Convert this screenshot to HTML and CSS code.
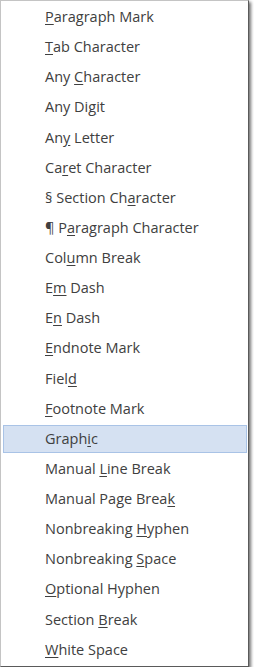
FILE: index.html
```html
<!DOCTYPE html>
<html lang="en">
<head>
    <meta charset="utf-8" />
    <title>Special</title>
    <link rel="stylesheet" href="styles.css">
</head>
<body>
    <div class="menu">
        <!--菜单项-->
        <ul>
            <li><span class="label"><u>P</u>aragraph Mark</span></li>
            <li><span class="label"><u>T</u>ab Character</span></li>
            <li><span class="label">Any <u>C</u>haracter</span></li>
            <li><span class="label">Any Di<u>g</u>it</span></li>
            <li><span class="label">An<u>y</u> Letter</span></li>
            <li><span class="label">Ca<u>r</u>et Character</span></li>
            <li><span class="label">§ Section Ch<u>a</u>racter</span></li>
            <li><span class="label">¶ P<u>a</u>ragraph Character</span></li>
            <li><span class="label">Col<u>u</u>mn Break</span></li>
            <li><span class="label">E<u>m</u> Dash</span></li>
            <li><span class="label">E<u>n</u> Dash</span></li>
            <li><span class="label"><u>E</u>ndnote Mark</span></li>
            <li><span class="label">Fiel<u>d</u></span></li>
            <li><span class="label"><u>F</u>ootnote Mark</span></li>
            <li class="current"><span class="label">Graph<u>i</u>c</span></li>
            <li><span class="label">Manual <u>L</u>ine Break</span></li>
            <li><span class="label">Manual Page Brea<u>k</u></span></li>
            <li><span class="label">Nonbreaking <u>H</u>yphen</span></li>
            <li><span class="label">Nonbreaking <u>S</u>pace</span></li>
            <li><span class="label"><u>O</u>ptional Hyphen</span></li>
            <li><span class="label">Section <u>B</u>reak</span></li>
            <li><span class="label"><u>W</u>hite Space</span></li>
        </ul>
    </div>
</body>
</html>
```

FILE: styles.css
```css
* {
    margin: 0;
    padding: 0
}

ul {
    list-style: none
}

body {
    background-color: #fff;
    font-family: "Open Sans", "Noto Sans", sans-serif;
}

.menu {
    width: 247px;
    height: 664px;
    padding-top: 1px;
    border: 1px solid #c4c4c4;
    border-right-color: #5a5a5a;
    border-bottom-color: #5a5a5a;
    box-shadow: 2px 2px 3px rgba(0, 0, 0, .55);
    box-sizing: content-box;
}

    .menu ul {
        display: flex;
        flex-direction: column;
    }

    .menu li {
        height: 30.14px;
        padding: 1px 0 1px 2px;
        box-sizing: border-box;
    }

    .menu .label {
        display: block;
        width: 244px;
        height: 100%;
        padding-left: 41px;
        border: 1px solid transparent;
        box-sizing: border-box;
        font-size: 14.5px;
        line-height: 26px;
        color: #404040;
        white-space: nowrap;
    }

    .menu u {
        text-underline-offset: 2px;
    }

    .menu li.current .label {
        background-color: #d5e1f2;
        border-color: #a9c3e6;
    }
```
